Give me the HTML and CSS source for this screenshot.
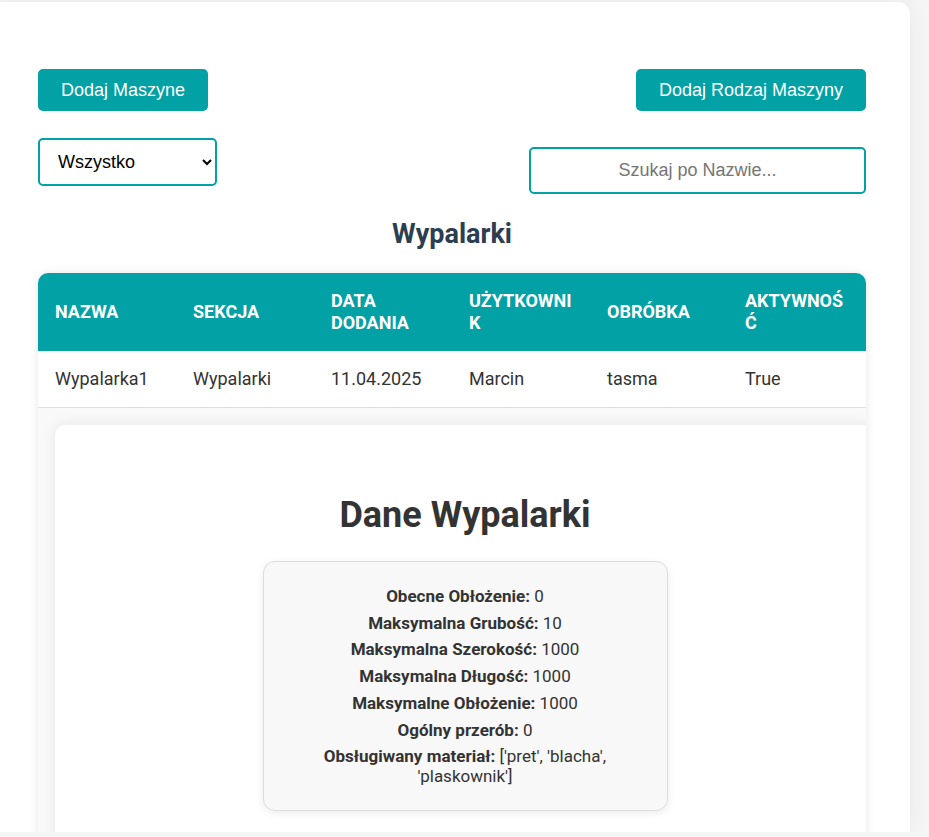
FILE: index.html
```html
<!DOCTYPE html>
<html lang="pl">
<head>
<meta charset="utf-8">
<title>Maszyny</title>
<link rel="stylesheet" href="styles.css">
</head>
<body>
<div class="container">
  <div class="actions">
    <button class="btn">Dodaj Maszyne</button>
    <button class="btn">Dodaj Rodzaj Maszyny</button>
  </div>
  <div class="filters">
    <select class="select">
      <option>Wszystko</option>
    </select>
    <input class="search" type="text" placeholder="Szukaj po Nazwie...">
  </div>
  <h3 class="section-title">Wypalarki</h3>
  <div class="table-wrap">
    <table class="table">
      <thead>
        <tr>
          <th>Nazwa</th>
          <th>Sekcja</th>
          <th>Data dodania</th>
          <th>Użytkownik</th>
          <th>Obróbka</th>
          <th>Aktywność</th>
        </tr>
      </thead>
      <tbody>
        <tr class="row">
          <td>Wypalarka1</td>
          <td>Wypalarki</td>
          <td>11.04.2025</td>
          <td>Marcin</td>
          <td>tasma</td>
          <td>True</td>
        </tr>
        <tr class="details-row">
          <td colspan="6">
            <div class="card">
              <h2 class="card-title">Dane Wypalarki</h2>
              <div class="info">
                <p><strong>Obecne Obłożenie:</strong> 0</p>
                <p><strong>Maksymalna Grubość:</strong> 10</p>
                <p><strong>Maksymalna Szerokość:</strong> 1000</p>
                <p><strong>Maksymalna Długość:</strong> 1000</p>
                <p><strong>Maksymalne Obłożenie:</strong> 1000</p>
                <p><strong>Ogólny przerób:</strong> 0</p>
                <p><strong>Obsługiwany materiał:</strong> ['pret', 'blacha', 'plaskownik']</p>
              </div>
            </div>
          </td>
        </tr>
      </tbody>
    </table>
  </div>
</div>
</body>
</html>
```

FILE: styles.css
```css
html, body {
  margin: 0;
  padding: 0;
  overflow: hidden;
}

body {
  background: #f5f5f5;
  font-family: Roboto, "Liberation Sans", Arial, sans-serif;
  color: #333;
}

.container {
  box-sizing: border-box;
  width: 916px;
  height: 830px;
  margin: 2px 0 0 -6px;
  padding: 67px 44px 0 44px;
  background: #fff;
  border-radius: 0 12px 0 0;
  box-shadow: 0 0 20px rgba(0, 0, 0, 0.06);
  overflow: hidden;
}

.actions {
  display: flex;
  justify-content: space-between;
  align-items: flex-start;
}

.btn {
  font-family: "Liberation Sans", Arial, sans-serif;
  font-size: 18px;
  line-height: 20px;
  padding: 11px 23px;
  background: #01a1a6;
  color: #fff;
  border: none;
  border-radius: 5px;
  cursor: pointer;
}

.filters {
  display: flex;
  justify-content: space-between;
  align-items: flex-start;
  margin-top: 27px;
}

.select {
  box-sizing: border-box;
  width: 179px;
  height: 48px;
  padding: 0 10px 0 14px;
  font-family: "Liberation Sans", Arial, sans-serif;
  font-size: 18px;
  color: #000;
  background: #fff;
  border: 2px solid #01a1a6;
  border-radius: 5px;
}

.search {
  box-sizing: border-box;
  width: 337px;
  height: 47px;
  margin-top: 9px;
  padding: 0 12px;
  font-family: "Liberation Sans", Arial, sans-serif;
  font-size: 18px;
  text-align: center;
  border: 2px solid #01a1a6;
  border-radius: 5px;
  outline: none;
}

.search::placeholder {
  color: #757575;
}

.section-title {
  margin: 24px 0 23px;
  font-size: 27px;
  font-weight: 700;
  text-align: center;
  color: #2c3e50;
}

.table-wrap {
  border-radius: 10px 10px 0 0;
  overflow: hidden;
  box-shadow: 0 0 10px rgba(0, 0, 0, 0.1);
  background: #fff;
}

.table {
  width: 100%;
  border-collapse: collapse;
  table-layout: fixed;
  font-size: 18px;
}

.table th {
  background: #01a1a6;
  color: #fff;
  text-transform: uppercase;
  font-weight: 700;
  text-align: left;
  line-height: 22px;
  padding: 17px;
  overflow-wrap: anywhere;
}

.table td {
  padding: 17px;
  line-height: 22px;
  text-align: left;
  color: #333;
}

.row td {
  border-bottom: 1px solid #ddd;
}

.details-row td {
  background: #f9f9f9;
}

.card {
  box-sizing: border-box;
  width: calc(100% + 26px);
  padding: 49px 20px 40px;
  background: #fff;
  border-radius: 10px;
  box-shadow: 0 0 15px rgba(0, 0, 0, 0.08);
}

.card-title {
  margin: 30px 0 35px;
  font-size: 36px;
  font-weight: 700;
  text-align: center;
  color: #333;
}

.info {
  box-sizing: border-box;
  width: 405px;
  margin: 0 auto;
  padding: 17px 20px;
  background: #f8f8f8;
  border: 1px solid #ddd;
  border-radius: 12px;
  box-shadow: 0 2px 8px rgba(0, 0, 0, 0.08);
  text-align: center;
  font-size: 17px;
  line-height: 20px;
}

.info p {
  margin: 6.75px 0;
}
```
